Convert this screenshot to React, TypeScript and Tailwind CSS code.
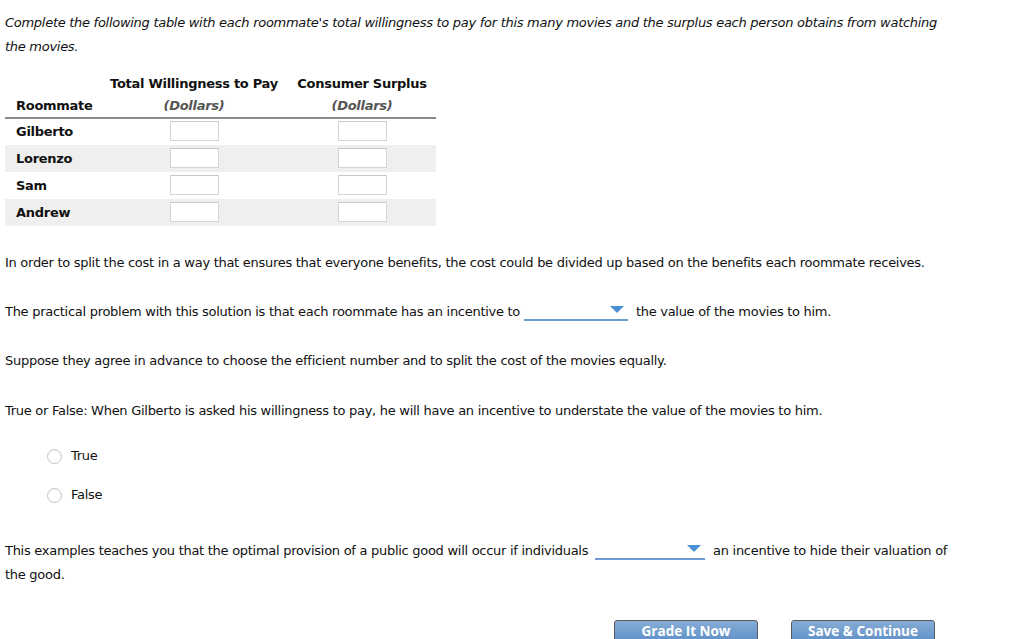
import React from "react";

const font = { fontFamily: '"DejaVu Sans", Verdana, sans-serif' };

function Dropdown({ width }: { width: string }) {
  return (
    <span className={`relative inline-block align-baseline ${width} h-[16px] border-b-2 border-[#6c9bd2] mx-[4px] translate-y-[5px]`}>
      <svg className="absolute right-[4px] top-[1px]" width="14" height="8" viewBox="0 0 14 8">
        <polygon points="0,0 14,0 7,7" fill="#4b8fd6" />
      </svg>
    </span>
  );
}

function Cell() {
  return <div className="w-[49px] h-[20px] bg-white border border-[#d4d4d4] border-t-[#c8c8c8]" />;
}

export default function App() {
  const rows = ["Gilberto", "Lorenzo", "Sam", "Andrew"];
  return (
    <div className="w-[1024px] min-h-[660px] bg-white text-[13px] tracking-[-0.28px] text-[#111] leading-[24px] pl-[5px] pt-[11px]" style={font}>
      <p className="italic w-[945px] text-[#111]">
        Complete the following table with each roommate's total willingness to pay for this many movies and the surplus each person obtains from watching the movies.
      </p>

      <div className="w-[431px] mt-[14px] font-bold">
        <div className="flex h-[22px] items-center">
          <div className="w-[95px]" />
          <div className="w-[188px] text-center">Total Willingness to Pay</div>
          <div className="w-[148px] text-center">Consumer Surplus</div>
        </div>
        <div className="flex h-[24px] items-center border-b-2 border-[#8a8a8a]">
          <div className="w-[95px] pl-[11px]">Roommate</div>
          <div className="w-[188px] text-center italic text-[#555]">(Dollars)</div>
          <div className="w-[148px] text-center italic text-[#555]">(Dollars)</div>
        </div>
        {rows.map((r, i) => (
          <div key={r} className={`flex ${i === 0 ? "h-[26px]" : "h-[27px]"} items-center ${i % 2 === 1 ? "bg-[#efefef]" : "bg-white"}`}>
            <div className="w-[95px] pl-[11px]">{r}</div>
            <div className="w-[188px] flex justify-center -translate-y-[1px]">
              <Cell />
            </div>
            <div className="w-[148px] flex justify-center -translate-y-[1px]">
              <Cell />
            </div>
          </div>
        ))}
      </div>

      <p className="mt-[25px]">
        In order to split the cost in a way that ensures that everyone benefits, the cost could be divided up based on the benefits each roommate receives.
      </p>

      <p className="mt-[25px]">
        <span>The practical problem with this solution is that each roommate has an incentive to</span>
        <Dropdown width="w-[104px]" />
        <span> the value of the movies to him.</span>
      </p>

      <p className="mt-[25px]">
        Suppose they agree in advance to choose the efficient number and to split the cost of the movies equally.
      </p>

      <p className="mt-[26px]">
        True or False: When Gilberto is asked his willingness to pay, he will have an incentive to understate the value of the movies to him.
      </p>

      <div className="mt-[21px] pl-[42px] flex flex-col gap-[15px]">
        {["True", "False"].map((t) => (
          <label key={t} className="flex items-center h-[24px]">
            <span className="w-[15px] h-[15px] rounded-full border border-[#c4c4c4] bg-white shadow-[inset_0_1px_1px_rgba(0,0,0,0.06)]" />
            <span className="ml-[9px]">{t}</span>
          </label>
        ))}
      </div>

      <p className="mt-[32px] w-[960px]">
        <span>This examples teaches you that the optimal provision of a public good will occur if individuals</span>
        <Dropdown width="w-[110px] ml-[7px]" />
        <span> an incentive to hide their valuation of</span>
        <br />
        <span>the good.</span>
      </p>

      <div className="mt-[33px] flex pl-[609px] gap-[33px]">
        {["Grade It Now", "Save & Continue"].map((b) => (
          <div
            key={b}
            className="w-[144px] h-[24px] rounded-t-[3px] border border-[#5a5a5a] bg-gradient-to-b from-[#86acd6] to-[#5d8ec6] text-white font-bold text-[13.5px] tracking-normal leading-[20px] text-center"
            style={{ fontFamily: '"Open Sans", "Noto Sans", sans-serif' }}
          >
            {b}
          </div>
        ))}
      </div>
    </div>
  );
}
